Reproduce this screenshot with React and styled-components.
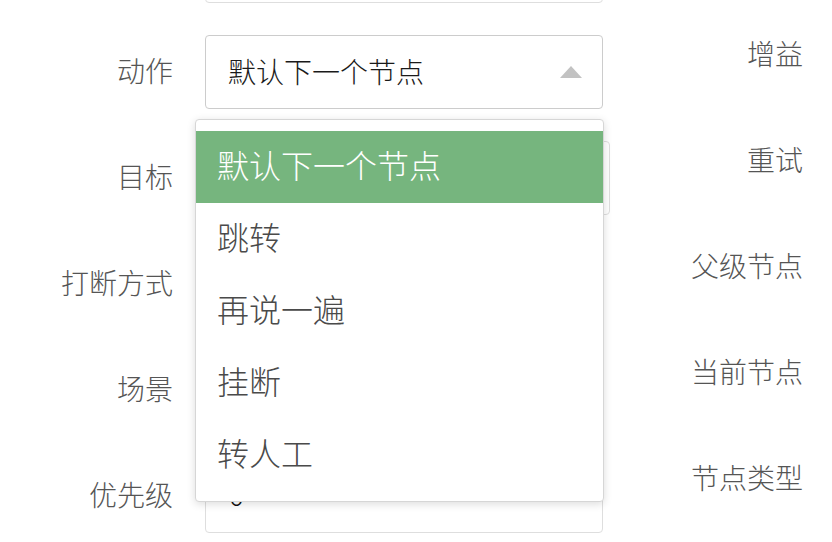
import React from 'react';
import styled, { createGlobalStyle } from 'styled-components';

const GlobalStyle = createGlobalStyle`
  html, body {
    margin: 0;
    padding: 0;
    background: #ffffff;
  }
  body {
    font-family: "Noto Sans CJK SC", "Noto Sans", sans-serif;
    font-weight: 300;
  }
`;

const Page = styled.div`
  width: 832px;
  height: 542px;
  overflow: hidden;
  display: grid;
  grid-template-columns: 610px 1fr;
  align-items: start;
`;

const Column = styled.div`
  display: flex;
  flex-direction: column;
  gap: 32px;
  margin-top: ${props => props.offset}px;
`;

const Row = styled.div`
  display: flex;
  align-items: center;
  gap: 32px;
  height: 74px;
`;

const Label = styled.label`
  flex: 0 0 ${props => props.width}px;
  box-sizing: border-box;
  padding-bottom: 4px;
  text-align: right;
  font-size: 28px;
  line-height: 1;
  color: #555555;
`;

const Input = styled.div`
  position: relative;
  box-sizing: border-box;
  width: ${props => props.width || 398}px;
  height: 74px;
  border: 1px solid #dedede;
  border-radius: 4px;
  background: #ffffff;
  display: flex;
  align-items: center;
  padding: 0 0 4px 23px;
  font-size: 28px;
  color: #111111;
`;

const Grip = styled.svg`
  position: absolute;
  right: 8px;
  bottom: 2px;
`;

const SelectBox = styled.div`
  position: relative;
  box-sizing: border-box;
  width: 398px;
  height: 74px;
  border: 1px solid #cccccc;
  border-radius: 4px;
  background: #ffffff;
  display: flex;
  align-items: center;
  justify-content: space-between;
  padding: 0 20px 0 22px;
  font-size: 28px;
  color: #1a1a1a;
`;

const Value = styled.span`
  padding-bottom: 3px;
`;

const Caret = styled.span`
  width: 0;
  height: 0;
  border-left: 11.5px solid transparent;
  border-right: 11.5px solid transparent;
  border-bottom: 12px solid #c2c2c2;
`;

const Menu = styled.ul`
  position: absolute;
  z-index: 5;
  left: -11px;
  top: 83px;
  box-sizing: border-box;
  width: 409px;
  margin: 0;
  padding: 11px 0 10px;
  list-style: none;
  background: #ffffff;
  border: 1px solid #d6d6d6;
  border-radius: 4px;
  box-shadow: 0 2px 8px rgba(0, 0, 0, 0.14);
`;

const Option = styled.li`
  box-sizing: border-box;
  height: 72px;
  display: flex;
  align-items: center;
  padding: 0 0 6px 21px;
  font-size: 32px;
  color: ${props => (props.selected ? '#ffffff' : '#4a4a4a')};
  background: ${props => (props.selected ? '#76b57e' : 'transparent')};
`;

const options = ['默认下一个节点', '跳转', '再说一遍', '挂断', '转人工'];

const rightLabels = ['', '增益', '重试', '父级节点', '当前节点', '节点类型'];

export default function App() {
  return (
    <>
      <GlobalStyle />
      <Page>
        <Column offset={-71}>
          <Row>
            <Label width={173} />
            <Input>
              <Grip width="10" height="4" viewBox="0 0 10 4">
                <path d="M2 0v3M7 0v3" stroke="#666" strokeWidth="1.2" />
              </Grip>
            </Input>
          </Row>
          <Row>
            <Label width={173}>动作</Label>
            <SelectBox>
              <Value>默认下一个节点</Value>
              <Caret />
              <Menu>
                {options.map((o, i) => (
                  <Option key={o} selected={i === 0}>
                    {o}
                  </Option>
                ))}
              </Menu>
            </SelectBox>
          </Row>
          <Row>
            <Label width={173}>目标</Label>
            <Input width={405} />
          </Row>
          <Row>
            <Label width={173}>打断方式</Label>
            <Input />
          </Row>
          <Row>
            <Label width={173}>场景</Label>
            <Input />
          </Row>
          <Row>
            <Label width={173}>优先级</Label>
            <Input>0</Input>
          </Row>
        </Column>
        <Column offset={-88}>
          {rightLabels.map((l, i) => (
            <Row key={i}>
              <Label width={193}>{l}</Label>
              <Input />
            </Row>
          ))}
        </Column>
      </Page>
    </>
  );
}
